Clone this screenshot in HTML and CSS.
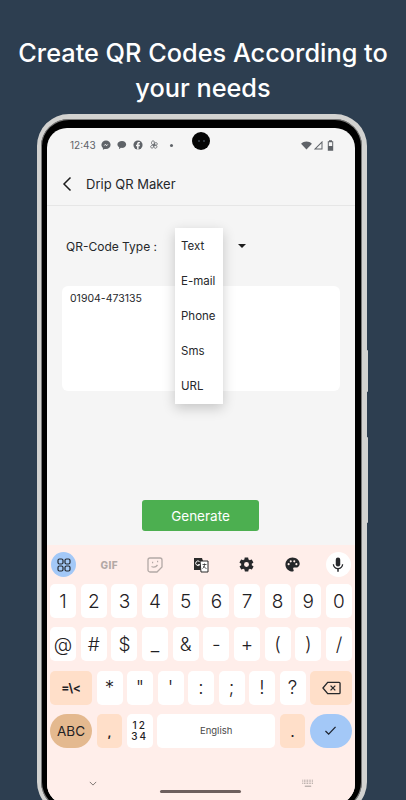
FILE: index.html
```html
<!DOCTYPE html>
<html lang="en">
<head>
    <meta charset="UTF-8">
    <meta name="viewport" content="width=device-width, initial-scale=1.0">
    <title>Drip QR Maker</title>
    <link rel="stylesheet" href="styles.css">
</head>
<body>
    <h1 class="headline">Create QR Codes According to your needs</h1>

    <div class="phone">
        <span class="side-btn side-btn-power"></span>
        <span class="side-btn side-btn-volume"></span>
        <div class="bezel">
            <div class="screen">
                <span class="camera"><span class="lens"></span><span class="lens"></span></span>

                <div class="status-bar">
                    <span class="clock">12:43</span>
                    <svg class="status-icon" viewBox="0 0 12 12"><path d="M6 .5C2.900.5.500 2.800.500 5.800c0 1.600.700 3 1.800 3.900v2l1.900-1c.5.100 1.100.200 1.800.200 3.100 0 5.500-2.300 5.500-5.100C11.500 2.800 9.100.500 6 .500z" fill="#5f6368"/><path d="M2.800 7.300l2.300-2.500 1.500 1.300 2.500-1.300-2.300 2.500-1.500-1.300z" fill="#fff"/></svg>
                    <svg class="status-icon" viewBox="0 0 12 12"><path d="M6 1.200c-3 0-5.500 1.800-5.500 4.200 0 1.400.900 2.600 2.200 3.400l-.4 2.200 2.400-1.600c.3 0 .6.100 1 .100 3 0 5.300-1.800 5.300-4.100S9 1.200 6 1.200z" fill="#5f6368"/></svg>
                    <svg class="status-icon" viewBox="0 0 12 12"><circle cx="6" cy="6" r="5.500" fill="#5f6368"/><path d="M6.700 11.500V7.400h1.400l.3-1.700H6.700V4.800c0-.5.200-.8.900-.8h.8V2.600c-.4-.1-.9-.1-1.300-.1-1.400 0-2.200.8-2.200 2.200v1H3.600v1.700h1.300v4.100z" fill="#f5f5f5"/></svg>
                    <svg class="status-icon" viewBox="0 0 12 12" fill="none" stroke="#5f6368" stroke-width="1"><path d="M6 6C3.500 6 3 4.500 3 3.200 3 1.800 4 1 5 1c1.300 0 1.800 1.200 1 5zM6 6c2.500 0 3.500.9 3.500 2 0 1.200-1 1.900-2 1.900C6.300 9.900 5.600 8.800 6 6zM6 6c-.4 2.500-1.300 4-2.800 3.600C2 9.300 1.600 8 2.400 7 3 6.300 4.200 6 6 6zM6 6c.4-2 1.400-3.200 2.800-2.800 1.200.4 1.500 1.800.7 2.600C9 6.300 7.800 6.300 6 6z"/></svg>
                    <span class="status-dot"></span>
                    <span class="status-right">
                        <svg class="status-wifi" viewBox="0 0 12 10"><path d="M0 3l6 6.500L12 3C10.400 1.400 8.300.5 6 .5S1.600 1.400 0 3z" fill="#5f6368"/></svg>
                        <svg class="status-signal" viewBox="0 0 10 10"><path d="M9.500.8v8.700H.8zM8.500 3.200L3.200 8.500h5.300z" fill="#5f6368" fill-rule="evenodd"/></svg>
                        <svg class="status-battery" viewBox="0 0 7 11"><path d="M2 .3h3v1h1.200v9.400H.8V1.300H2z" fill="#5f6368"/><path d="M1.800 2.300h3.400V6H1.800z" fill="#f5f5f5"/></svg>
                    </span>
                </div>

                <div class="app-bar">
                    <svg class="back-icon" viewBox="0 0 10 16" fill="none" stroke="#1d1d1d" stroke-width="1.500"><path d="M8.500 1.500L2 8l6.500 6.500"/></svg>
                    <span class="app-title">Drip QR Maker</span>
                </div>

                <div class="content">
                    <div class="type-row">
                        <span class="type-label">QR-Code Type :</span>
                        <span class="caret"></span>
                    </div>
                    <div class="text-box">01904-473135</div>
                    <button class="generate-button">Generate</button>
                </div>

                <ul class="dropdown">
                    <li>Text</li>
                    <li>E-mail</li>
                    <li>Phone</li>
                    <li>Sms</li>
                    <li>URL</li>
                </ul>

                <div class="keyboard">
                    <div class="kb-toolbar">
                        <span class="tool tool-active">
                            <svg viewBox="0 0 14 14" fill="none" stroke="#22272e" stroke-width="1.200"><rect x="1" y="1" width="5" height="5" rx="1.500"/><rect x="8" y="1" width="5" height="5" rx="1.500"/><rect x="1" y="8" width="5" height="5" rx="1.500"/><rect x="8" y="8" width="5" height="5" rx="1.500"/></svg>
                        </span>
                        <span class="tool tool-gif">GIF</span>
                        <span class="tool">
                            <svg class="tool-sticker" viewBox="0 0 16 16" fill="none" stroke="#b3a9a6" stroke-width="1.300"><path d="M3 1h10a2 2 0 0 1 2 2v7l-5 5H3a2 2 0 0 1-2-2V3a2 2 0 0 1 2-2z"/><path d="M4.500 9.500c2 1 4.500.5 6-1.500"/><path d="M5 5.500h1.200M10 4.500h1.200"/></svg>
                        </span>
                        <span class="tool">
                            <svg class="tool-translate" viewBox="0 0 16 16"><path d="M1 1h8l4 12H1z" fill="#2b2b2b"/><path d="M7 4h8v11H8z" fill="#fff" stroke="#2b2b2b"/><path d="M9.500 7.500h4M11.500 6.500v1c0 2-1 3.500-2 4M10.500 9c.5 1 1.500 2 3 2.500" fill="none" stroke="#2b2b2b" stroke-width=".8"/><path d="M6.500 4.500a2.300 2.300 0 1 0 .3 3.200H4.800" fill="none" stroke="#fff" stroke-width="1"/></svg>
                        </span>
                        <span class="tool">
                            <svg class="tool-gear" viewBox="0 0 24 24"><path d="M19.400 13c.1-.3.100-.7.100-1s0-.7-.1-1l2.100-1.600c.2-.2.200-.4.100-.6l-2-3.500c-.1-.2-.4-.3-.6-.2l-2.500 1c-.5-.4-1.100-.7-1.700-1l-.4-2.700c0-.2-.2-.4-.5-.4h-4c-.3 0-.5.200-.5.400l-.4 2.700c-.6.300-1.200.6-1.700 1l-2.500-1c-.2-.1-.5 0-.6.200l-2 3.500c-.1.200-.1.400.1.600L4.600 11c-.1.300-.1.700-.1 1s0 .7.100 1l-2.100 1.600c-.2.200-.2.400-.1.600l2 3.500c.1.200.4.300.6.200l2.500-1c.5.400 1.100.7 1.700 1l.4 2.700c0 .2.200.4.500.4h4c.3 0 .5-.2.500-.4l.4-2.700c.6-.3 1.200-.6 1.700-1l2.500 1c.2.1.5 0 .6-.2l2-3.500c.1-.2.100-.4-.1-.6zM12 15.500a3.500 3.500 0 1 1 0-7 3.500 3.500 0 0 1 0 7z" fill="#26282b"/></svg>
                        </span>
                        <span class="tool">
                            <svg class="tool-palette" viewBox="0 0 24 24"><path d="M12 2C6.500 2 2 6.500 2 12s4.500 10 10 10c.9 0 1.700-.7 1.700-1.700 0-.4-.2-.8-.4-1.100-.3-.3-.4-.7-.4-1.100 0-.9.700-1.700 1.700-1.700h2c3.100 0 5.600-2.500 5.600-5.600C22 6 17.500 2 12 2z" fill="#26282b"/><circle cx="6.500" cy="11.500" r="1.500" fill="#fff0eb"/><circle cx="9.500" cy="7.500" r="1.500" fill="#fff0eb"/><circle cx="14.500" cy="7.500" r="1.500" fill="#fff0eb"/><circle cx="17.500" cy="11.500" r="1.500" fill="#fff0eb"/></svg>
                        </span>
                        <span class="tool tool-mic">
                            <svg viewBox="0 0 24 24"><path d="M12 14a3 3 0 0 0 3-3V5a3 3 0 0 0-6 0v6a3 3 0 0 0 3 3z" fill="#26282b"/><path d="M17.300 11c0 3-2.500 5.100-5.300 5.100S6.700 14 6.700 11H5c0 3.400 2.700 6.200 6 6.700V21h2v-3.300c3.300-.5 6-3.300 6-6.700z" fill="#26282b"/></svg>
                        </span>
                    </div>

                    <div class="kb-row">
                        <span class="key">1</span><span class="key">2</span><span class="key">3</span><span class="key">4</span><span class="key">5</span><span class="key">6</span><span class="key">7</span><span class="key">8</span><span class="key">9</span><span class="key">0</span>
                    </div>
                    <div class="kb-row">
                        <span class="key">@</span><span class="key">#</span><span class="key">$</span><span class="key">_</span><span class="key">&amp;</span><span class="key">-</span><span class="key">+</span><span class="key">(</span><span class="key">)</span><span class="key">/</span>
                    </div>
                    <div class="kb-row">
                        <span class="key key-wide key-peach key-small">=\&lt;</span>
                        <span class="key">*</span><span class="key">"</span><span class="key">'</span><span class="key">:</span><span class="key">;</span><span class="key">!</span><span class="key">?</span>
                        <span class="key key-wide key-peach">
                            <svg class="backspace" viewBox="0 0 20 14" fill="none" stroke="#26282b" stroke-width="1.400"><path d="M6 1h12a1 1 0 0 1 1 1v10a1 1 0 0 1-1 1H6L1 7z"/><path d="M9 4.500l5 5M14 4.500l-5 5"/></svg>
                        </span>
                    </div>
                    <div class="kb-row">
                        <span class="key key-wide key-abc">ABC</span>
                        <span class="key key-peach key-low">,</span>
                        <span class="key key-numbers">12<br>34</span>
                        <span class="key key-space">English</span>
                        <span class="key key-peach key-low">.</span>
                        <span class="key key-wide key-done">
                            <svg class="check" viewBox="0 0 14 12" fill="none" stroke="#1d2430" stroke-width="1.400"><path d="M1.500 6.500l3.500 3.500 7.500-8"/></svg>
                        </span>
                    </div>

                    <div class="kb-nav">
                        <svg class="nav-down" viewBox="0 0 10 6" fill="none" stroke="#5f5a58" stroke-width="1"><path d="M1 1l4 4 4-4"/></svg>
                        <svg class="nav-keyboard" viewBox="0 0 14 10" fill="none" stroke="#8b8583" stroke-width="1"><path d="M0 1.500h14M0 3.500h14" stroke-dasharray="1 1"/><path d="M0 5.500h14" stroke-dasharray="1 1"/><path d="M3 9h8"/></svg>
                    </div>
                    <span class="home-bar"></span>
                </div>
            </div>
        </div>
    </div>
</body>
</html>
```

FILE: styles.css
```css
body {
    font-family: 'Inter', 'Liberation Sans', sans-serif;
    background-color: #2d3e50;
    width: 406px;
    height: 800px;
    margin: 0;
    overflow: hidden;
}

.headline {
    margin: 0 auto;
    padding-top: 35px;
    width: 390px;
    height: 79px;
    font-size: 25.300px;
    line-height: 35px;
    font-weight: 500;
    text-align: center;
    color: #ffffff;
}

.phone {
    position: relative;
    box-sizing: border-box;
    width: 330px;
    height: 700px;
    margin-left: 37px;
    border-style: solid;
    border-width: 5px 5px 4px 4px;
    border-color: #d2d2d0;
    border-radius: 32px;
    background-color: #000000;
    box-shadow: inset 0 0 0 1px #777777;
}

.side-btn {
    position: absolute;
    right: -6px;
    width: 1px;
    background-color: #d2d2d0;
    border-radius: 0 2px 2px 0;
}

.side-btn-power {
    top: 231px;
    height: 42px;
}

.side-btn-volume {
    top: 318px;
    height: 86px;
}

.bezel {
    height: 100%;
    box-sizing: border-box;
    padding: 9px 7px 6px 6px;
}

.screen {
    position: relative;
    height: 100%;
    display: flex;
    flex-direction: column;
    overflow: hidden;
    border-radius: 20px;
    background-color: #f5f5f5;
}

.camera {
    position: absolute;
    top: 4px;
    left: 145px;
    width: 18px;
    height: 18px;
    display: flex;
    align-items: center;
    justify-content: center;
    gap: 3px;
    border-radius: 50%;
    background-color: #050505;
}

.lens {
    width: 2px;
    height: 2px;
    border-radius: 50%;
    background-color: #3c4650;
}

.status-bar {
    height: 34px;
    padding: 0 21px 0 23px;
    display: flex;
    align-items: center;
    gap: 6px;
    font-size: 10px;
    color: #5f6368;
}

.clock {
    margin-right: -1px;
}

.status-icon {
    width: 10px;
    height: 10px;
}

.status-dot {
    width: 3px;
    height: 3px;
    margin-left: 5px;
    border-radius: 50%;
    background-color: #5f6368;
}

.status-right {
    margin-left: auto;
    display: flex;
    align-items: center;
    gap: 1px;
}

.status-wifi {
    width: 11px;
    height: 9px;
}

.status-signal {
    width: 10px;
    height: 10px;
}

.status-battery {
    width: 7px;
    height: 11px;
    margin-left: 3px;
}

.app-bar {
    height: 43px;
    padding-left: 15px;
    display: flex;
    align-items: center;
    gap: 14px;
    border-bottom: 1px solid #e6e6e6;
}

.back-icon {
    width: 10px;
    height: 16px;
}

.app-title {
    font-size: 13px;
    color: #26282b;
}

.content {
    flex: 1;
    padding: 0 15px;
}

.type-row {
    height: 80px;
    padding-left: 4px;
    display: flex;
    align-items: center;
    font-size: 12px;
    color: #26282b;
}

.type-label {
    width: 172px;
}

.caret {
    width: 0;
    height: 0;
    border-left: 4px solid transparent;
    border-right: 4px solid transparent;
    border-top: 4px solid #1d1d1d;
}

.text-box {
    box-sizing: border-box;
    height: 105px;
    padding: 6px 8px;
    font-size: 10.500px;
    border-radius: 6px;
    background-color: #ffffff;
    color: #26282b;
}

.generate-button {
    display: block;
    width: 117px;
    height: 31px;
    margin: 109px 0 0 80px;
    font-family: inherit;
    font-size: 13.500px;
    color: #ffffff;
    border: none;
    border-radius: 3px;
    background-color: #4caf50;
}

.dropdown {
    position: absolute;
    top: 100px;
    left: 128px;
    width: 48px;
    height: 176px;
    box-sizing: border-box;
    margin: 0;
    padding: 0 6px;
    list-style: none;
    font-size: 11.500px;
    background-color: #ffffff;
    color: #26282b;
    box-shadow: 0 4px 12px rgba(0, 0, 0, 0.2);
}

.dropdown li {
    height: 35.200px;
    display: flex;
    align-items: center;
}

.keyboard {
    position: relative;
    height: 259px;
    box-sizing: border-box;
    padding: 0 3px;
    background-color: #ffeeea;
}

.kb-toolbar {
    height: 39px;
    display: flex;
    align-items: center;
    justify-content: space-between;
    padding: 0 1px;
}

.tool {
    width: 25px;
    height: 25px;
    display: flex;
    align-items: center;
    justify-content: center;
    border-radius: 50%;
}

.tool svg {
    width: 14px;
    height: 14px;
}

.tool-active {
    background-color: #a3c8f7;
}

.tool-mic {
    background-color: #ffffff;
}

.tool-mic svg {
    width: 18px;
    height: 18px;
}

.tool .tool-sticker {
    width: 16px;
    height: 16px;
}

.tool .tool-translate {
    width: 16px;
    height: 16px;
}

.tool .tool-gear {
    width: 17px;
    height: 17px;
}

.tool .tool-palette {
    width: 17px;
    height: 17px;
}

.tool-gif {
    font-size: 10px;
    font-weight: 800;
    letter-spacing: 0.5px;
    color: #b3a9a6;
}

.kb-row {
    height: 34px;
    margin-bottom: 9.300px;
    display: flex;
    gap: 4.500px;
}

.key {
    flex: 1;
    display: flex;
    align-items: center;
    justify-content: center;
    font-family: 'Inter', sans-serif;
    font-size: 19px;
    font-weight: 300;
    border-radius: 5px;
    background-color: #ffffff;
    color: #1f2124;
}

.key-wide {
    flex: 0 0 42px;
}

.key-peach {
    background-color: #ffdfc9;
}

.key-small {
    font-size: 12px;
    font-weight: 700;
}

.key-low {
    align-items: flex-end;
    padding-bottom: 8px;
    box-sizing: border-box;
    font-size: 12px;
    font-weight: 700;
}

.key-abc {
    font-size: 13.500px;
    font-weight: 400;
    border-radius: 17px;
    background-color: #e4b98f;
}

.key-numbers {
    font-size: 10px;
    line-height: 11px;
    font-weight: 500;
    letter-spacing: 2px;
    text-align: center;
}

.key-space {
    flex: 0 0 118px;
    font-size: 9.500px;
    font-weight: 400;
    color: #4a4a4a;
}

.key-done {
    border-radius: 17px;
    background-color: #a3c8f7;
}

.backspace {
    width: 19px;
    height: 14px;
}

.check {
    width: 13px;
    height: 11px;
}

.kb-nav {
    padding: 22px 38px 0 39px;
    display: flex;
    align-items: center;
    justify-content: space-between;
}

.nav-down {
    width: 8px;
    height: 5px;
}

.nav-keyboard {
    width: 12px;
    height: 8px;
}

.home-bar {
    position: absolute;
    top: 245px;
    left: 113px;
    width: 81px;
    height: 3px;
    border-radius: 2px;
    background-color: #6e5f5e;
}
```
